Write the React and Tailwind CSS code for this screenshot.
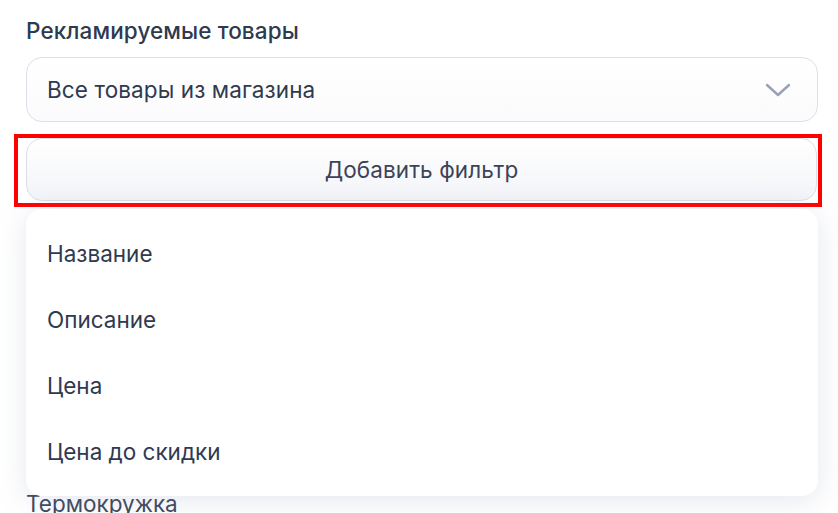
import React from "react";

const items = ["Название", "Описание", "Цена", "Цена до скидки"];

function Chevron() {
  return (
    <svg width="26" height="14" viewBox="0 0 26 14" fill="none">
      <path d="M2 2l11 10L24 2" stroke="#9aa1b4" strokeWidth="2.4" strokeLinecap="round" strokeLinejoin="round" />
    </svg>
  );
}

export default function App() {
  return (
    <div
      className="relative h-[513px] w-[838px] overflow-hidden bg-white px-[26px] pt-[16px] text-[#2e3a4f]"
      style={{ fontFamily: "Inter, 'Noto Sans', sans-serif" }}
    >
      {/* Section title */}
      <div className="text-[22.5px] font-medium leading-[30px] tracking-[0.1px]">Рекламируемые товары</div>

      {/* Select */}
      <div className="mt-[11px] flex h-[65px] w-[792px] items-center justify-between rounded-[16px] border border-[#dde0ea] bg-gradient-to-b from-white to-[#fbfbfd] pl-[20px] pr-[26px]">
        <span className="text-[22.5px] leading-[28px] tracking-[0.1px]">Все товары из магазина</span>
        <Chevron />
      </div>

      {/* Add filter button */}
      <div className="relative mt-[16px]">
        <button className="flex h-[63px] w-[791px] items-center justify-center rounded-[16px] border border-[#dcdfe8] bg-gradient-to-b from-white to-[#f3f4f8] text-[22.5px] leading-[28px] tracking-[0.1px] text-[#3a4459]">
          Добавить фильтр
        </button>
        {/* annotation frame */}
        <div className="pointer-events-none absolute left-[-12px] top-[-4px] h-[73px] w-[808px] border-[4px] border-[#ff0000]" />
      </div>

      {/* Dropdown menu */}
      <div className="relative z-10 mt-[8px] w-[792px] rounded-[16px] bg-white pb-[11px] pt-[12px] shadow-[0_4px_28px_rgba(150,160,190,0.25)]">
        {items.map((item) => (
          <div key={item} className="flex h-[66px] items-center px-[21px] text-[22.5px] leading-[28px]">
            {item}
          </div>
        ))}
      </div>

      <div className="mt-[-6px] text-[22.5px] leading-[28px] text-[#3a4459]">Термокружка</div>
    </div>
  );
}
